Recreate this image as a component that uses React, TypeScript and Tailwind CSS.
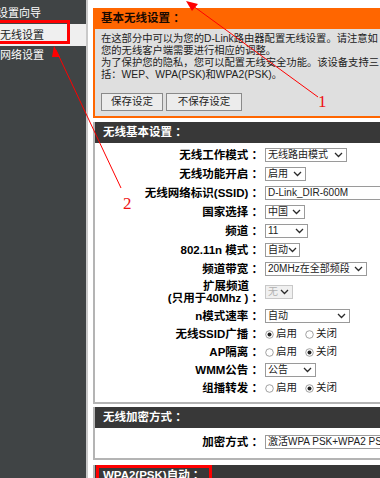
import React from 'react';

const font = "font-['Liberation_Sans','Noto_Sans_CJK_SC',sans-serif]";

function Chevron() {
  return (
    <svg width="9" height="6" viewBox="0 0 9 6" className="shrink-0">
      <path d="M1 1 L4.5 4.5 L8 1" fill="none" stroke="#2a2a2a" strokeWidth="1.3" />
    </svg>
  );
}

function Sel({ text, className, disabled }: { text: string; className: string; disabled?: boolean }) {
  return (
    <div
      className={`flex h-[14px] items-center justify-between border pl-[2px] pr-[3px] text-[10px] leading-none ${
        disabled ? 'border-[#c8c8c8] bg-[#f0f0f0] text-[#b0b0b0]' : 'border-[#9a9a9a] bg-white text-[#222]'
      } ${className}`}
    >
      <span className="whitespace-nowrap">{text}</span>
      <Chevron />
    </div>
  );
}

function Radio({ on }: { on?: boolean }) {
  return (
    <svg width="9" height="9" viewBox="0 0 9 9" className="shrink-0">
      <circle cx="4.5" cy="4.5" r="3.8" fill="white" stroke="#8a8a8a" strokeWidth="0.8" />
      {on && <circle cx="4.5" cy="4.5" r="2" fill="#222" />}
    </svg>
  );
}

function Radios({ first }: { first: boolean }) {
  return (
    <div className="flex items-center text-[10.5px] text-[#222]">
      <Radio on={first} />
      <span className="ml-[2px]">启用</span>
      <span className="ml-[8px]" />
      <Radio on={!first} />
      <span className="ml-[2px]">关闭</span>
    </div>
  );
}

function Row({ label, h, children }: { label: React.ReactNode; h: string; children: React.ReactNode }) {
  return (
    <div className={`flex items-center ${h}`}>
      <div className="w-[168px] shrink-0 text-right text-[11.5px] font-bold leading-[12px] text-black">{label}</div>
      <div className="ml-[2px] flex items-center">{children}</div>
    </div>
  );
}

function Header({ text }: { text: string }) {
  return (
    <div className="flex h-[21px] items-center bg-[#383838] pl-[8px] text-[11.5px] font-bold text-white">{text}</div>
  );
}

export default function App() {
  return (
    <div className={`relative flex h-[478px] w-[380px] overflow-hidden bg-white ${font}`}>
      {/* Side menu */}
      <div className="h-full w-[88px] shrink-0 border-r-2 border-[#c9c9c9] bg-[#404445] pt-[4px]">
        <div className="flex h-[18px] items-center text-[11px] text-white">
          <span className="-ml-[3px]">设置向导</span>
        </div>
        <div className="mt-[2px] flex h-[22px] items-center bg-[#efefef] text-[11px] text-[#222]">
          <span>无线设置</span>
        </div>
        <div className="flex h-[19px] items-center text-[11px] text-white">
          <span>网络设置</span>
        </div>
      </div>

      {/* Main column */}
      <div className="ml-[5px] w-[320px] shrink-0 pt-[8px]">
        <div className="border-x-2 border-b-2 border-[#ff6600] bg-[#dfdfdf]">
          <div className="flex h-[21px] items-center bg-[#ff6600] pl-[6px] text-[11.5px] font-bold text-[#1a0a00]">
            基本无线设置 ：
          </div>
          <div className="whitespace-nowrap px-[6px] pt-[4px] text-[10.3px] leading-[12px] text-[#222]">
            <div>在这部分中可以为您的D-Link路由器配置无线设置。请注意如</div>
            <div>您的无线客户端需要进行相应的调整。</div>
            <div>为了保护您的隐私，您可以配置无线安全功能。该设备支持三</div>
            <div>括：WEP、WPA(PSK)和WPA2(PSK)。</div>
          </div>
          <div className="flex gap-[3px] px-[6px] pb-[5px] pt-[12px]">
            <div className="flex h-[18px] w-[62px] items-center justify-center border border-[#8a8a8a] bg-[#ececec] text-[10.5px] text-[#222]">
              保存设定
            </div>
            <div className="flex h-[18px] w-[76px] items-center justify-center border border-[#8a8a8a] bg-[#ececec] text-[10.5px] text-[#222]">
              不保存设定
            </div>
          </div>
        </div>

        {/* Basic wireless */}
        <div className="mt-[4px] border-2 border-t-0 border-[#b4b4b4]">
          <Header text="无线基本设置 ：" />
          <div className="pb-[5px] pt-[2px]">
            <Row label="无线工作模式 ：" h="h-[19px]">
              <Sel text="无线路由模式" className="w-[82px]" />
            </Row>
            <Row label="无线功能开启 ：" h="h-[19px]">
              <Sel text="启用" className="w-[41px]" />
            </Row>
            <Row label="无线网络标识(SSID) ：" h="h-[19px]">
              <div className="flex h-[14px] w-[140px] items-center border border-[#9a9a9a] bg-white pl-[2px] text-[10px] text-[#222]">
                D-Link_DIR-600M
              </div>
            </Row>
            <Row label="国家选择 ：" h="h-[19px]">
              <Sel text="中国" className="w-[40px]" />
            </Row>
            <Row label="频道 ：" h="h-[19px]">
              <Sel text="11" className="w-[43px]" />
            </Row>
            <Row label="802.11n 模式 ：" h="h-[19px]">
              <Sel text="自动" className="w-[35px]" />
            </Row>
            <Row label="频道带宽 ：" h="h-[19px]">
              <Sel text="20MHz在全部频段" className="w-[102px]" />
            </Row>
            <Row
              label={
                <>
                  <div className="pr-[14px]">扩展频道</div>
                  <div>(只用于40Mhz ) ：</div>
                </>
              }
              h="h-[28px]"
            >
              <Sel text="无" className="w-[28px]" disabled />
            </Row>
            <Row label="n模式速率 ：" h="h-[19px]">
              <Sel text="自动" className="w-[85px]" />
            </Row>
            <Row label="无线SSID广播 ：" h="h-[18px]">
              <Radios first />
            </Row>
            <Row label="AP隔离 ：" h="h-[18px]">
              <Radios first={false} />
            </Row>
            <Row label="WMM公告 ：" h="h-[18px]">
              <Sel text="公告" className="w-[51px]" />
            </Row>
            <Row label="组播转发 ：" h="h-[18px]">
              <Radios first={false} />
            </Row>
          </div>
        </div>

        {/* Encryption */}
        <div className="mt-[3px] border-2 border-t-0 border-[#b4b4b4]">
          <Header text="无线加密方式 ：" />
          <div className="pb-[7px] pt-[4px]">
            <Row label="加密方式 ：" h="h-[19px]">
              <Sel text="激活WPA PSK+WPA2 PSK" className="w-[140px]" />
            </Row>
          </div>
        </div>

        <div className="mt-[5px] border-2 border-t-0 border-[#b4b4b4]">
          <div className="relative">
            <Header text="WPA2(PSK)自动 ：" />
            <div className="absolute left-[1px] top-0 h-[22px] w-[116px] border-[3px] border-[#ff0000]" />
          </div>
          <div className="h-[30px]" />
        </div>
      </div>

      {/* Red outline on the menu item */}
      <div className="absolute left-[-3px] top-[20px] h-[24px] w-[73px] border-[3px] border-[#ff0000]" />

      {/* Annotation arrows */}
      <svg className="pointer-events-none absolute left-0 top-0" width="380" height="478">
        <line x1="318" y1="97" x2="189" y2="3" stroke="#ff0000" strokeWidth="1" />
        <polygon points="186,1 198,4 192,11" fill="#ff0000" />
        <line x1="121" y1="188" x2="56" y2="50" stroke="#ff0000" strokeWidth="1" />
        <polygon points="54,46 60,57 52,57" fill="#ff0000" />
        <text x="318" y="107" fill="#ee1111" fontSize="17" fontFamily="Liberation Serif, serif">1</text>
        <text x="123" y="209" fill="#ee1111" fontSize="17" fontFamily="Liberation Serif, serif">2</text>
      </svg>
    </div>
  );
}
